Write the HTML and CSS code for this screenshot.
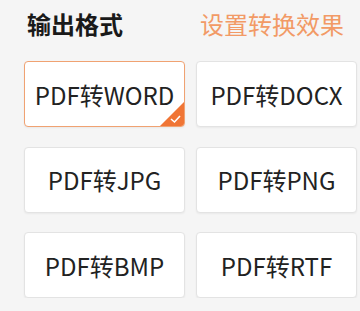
FILE: index.html
```html
<!DOCTYPE html>
<html lang="zh-CN">
<head>
    <meta charset="UTF-8">
    <meta name="viewport" content="width=device-width, initial-scale=1.0">
    <title>输出格式</title>
    <link rel="stylesheet" href="styles.css">
</head>
<body>
    <div class="panel">
        <div class="panel-head">
            <span class="title">输出格式</span>
            <a class="link" href="#">设置转换效果</a>
        </div>
        <div class="formats">
            <div class="format selected">
                PDF转WORD
                <svg class="tick" width="24" height="24" viewBox="0 0 24 24">
                    <path d="M24 0 L24 24 L0 24 Z" fill="#f07535"/>
                    <path d="M11 17 L14.5 20 L20 14" fill="none" stroke="#fff" stroke-width="1.6"/>
                </svg>
            </div>
            <div class="format">PDF转DOCX</div>
            <div class="format">PDF转JPG</div>
            <div class="format">PDF转PNG</div>
            <div class="format">PDF转BMP</div>
            <div class="format">PDF转RTF</div>
        </div>
    </div>
</body>
</html>
```

FILE: styles.css
```css
body{
    margin: 0;
    background-color: #f5f5f5;
    font-family: "Microsoft YaHei", "Noto Sans CJK SC", sans-serif;
}
.panel{
    padding: 10px 4px 0 24px;
}
.panel-head{
    display: grid;
    grid-template-columns: 161px 161px;
    column-gap: 11px;
    font-size: 24px;
    line-height: 28px;
}
.title{
    padding-left: 3px;
    font-weight: bold;
    color: #1a1a1a;
}
.link{
    padding-left: 4px;
    color: #f29a66;
    text-decoration: none;
    white-space: nowrap;
}
.formats{
    display: grid;
    grid-template-columns: 161px 161px;
    grid-auto-rows: 66px;
    column-gap: 11px;
    row-gap: 19.5px;
    margin-top: 23px;
}
.format{
    position: relative;
    display: flex;
    align-items: center;
    justify-content: center;
    background-color: #fff;
    border: 1px solid #e3e3e3;
    border-radius: 4px;
    box-shadow: 0 1px 2px rgba(0, 0, 0, 0.05);
    font-size: 24px;
    color: #222;
    overflow: hidden;
    box-sizing: border-box;
}
.format.selected{
    border-color: #f0a272;
}
.tick{
    position: absolute;
    right: 0;
    bottom: 0;
}
```
